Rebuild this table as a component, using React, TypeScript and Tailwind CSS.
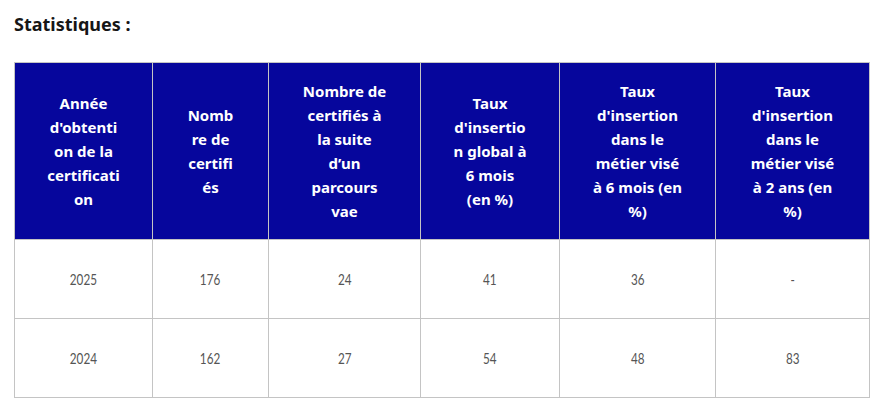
const HEADERS: string[][] = [
  ["Année", "d'obtenti", "on de la", "certificati", "on"],
  ["Nomb", "re de", "certifi", "és"],
  ["Nombre de", "certifiés à", "la suite", "d’un", "parcours", "vae"],
  ["Taux", "d'insertio", "n global à", "6 mois", "(en %)"],
  ["Taux", "d'insertion", "dans le", "métier visé", "à 6 mois (en", "%)"],
  ["Taux", "d'insertion", "dans le", "métier visé", "à 2 ans (en", "%)"],
];

const WIDTHS = ["w-[138px]", "w-[116px]", "w-[152px]", "w-[139px]", "w-[156px]", "w-[154px]"];

const ROWS: string[][] = [
  ["2025", "176", "24", "41", "36", "-"],
  ["2024", "162", "27", "54", "48", "83"],
];

export default function App() {
  return (
    <div className="min-h-[405px] bg-white px-[14px] pt-[12px] font-['Noto_Sans','Lato',sans-serif]">
      <h3 className="text-[18px] font-bold leading-[24px] text-[#161616]">Statistiques :</h3>

      <table className="mt-[26px] w-[855px] table-fixed border-collapse border border-[#c4c4c4]">
        <colgroup>
          {WIDTHS.map((w, i) => (
            <col key={i} className={w} />
          ))}
        </colgroup>
        <thead>
          <tr className="h-[177px] bg-[#06069c]">
            {HEADERS.map((lines, i) => (
              <th
                key={i}
                className="border border-[#c4c4c4] px-2 text-center align-middle text-[15px] font-bold leading-[24px] text-white"
              >
                {lines.map((l, j) => (
                  <span key={j} className="block whitespace-nowrap">
                    {l}
                  </span>
                ))}
              </th>
            ))}
          </tr>
        </thead>
        <tbody>
          {ROWS.map((row, r) => (
            <tr key={r} className="h-[79px]">
              {row.map((v, i) => (
                <td
                  key={i}
                  className="border border-[#c4c4c4] text-center align-middle font-['Lato',sans-serif] text-[15px] text-[#555555]"
                >
                  <span className="inline-block scale-x-[0.78]">{v}</span>
                </td>
              ))}
            </tr>
          ))}
        </tbody>
      </table>
    </div>
  );
}
